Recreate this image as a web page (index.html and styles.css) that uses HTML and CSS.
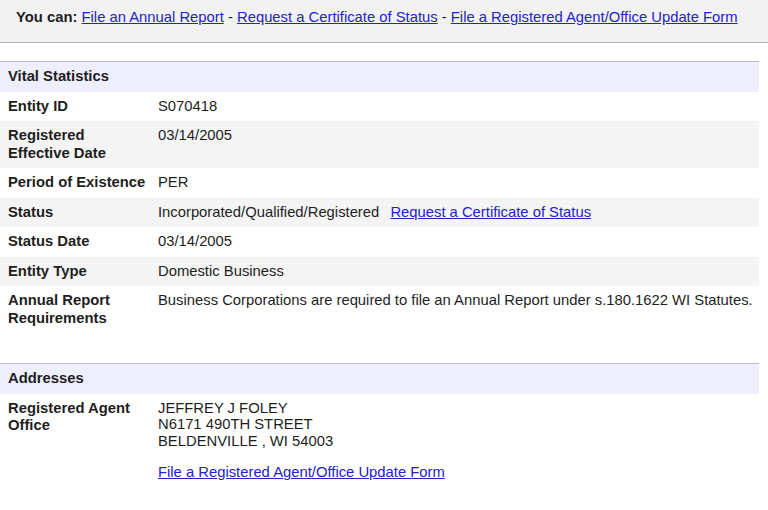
FILE: index.html
```html
<!DOCTYPE html>
<html lang="en">
<head>
    <meta charset="UTF-8">
    <meta name="viewport" content="width=device-width, initial-scale=1.0">
    <title>Corporate Records - Entity Details</title>
    <link rel="stylesheet" href="styles.css">
</head>
<body>
    <!-- Quick actions bar -->
    <div class="actions">
        <strong>You can:</strong>
        <a href="#">File an Annual Report</a> -
        <a href="#">Request a Certificate of Status</a> -
        <a href="#">File a Registered Agent/Office Update Form</a>
    </div>

    <table class="details">
        <colgroup><col class="label-col"><col></colgroup>
        <tr class="section-head"><th colspan="2">Vital Statistics</th></tr>
        <tr>
            <td class="label">Entity ID</td>
            <td>S070418</td>
        </tr>
        <tr class="alt">
            <td class="label">Registered Effective Date</td>
            <td>03/14/2005</td>
        </tr>
        <tr>
            <td class="label">Period of Existence</td>
            <td>PER</td>
        </tr>
        <tr class="alt">
            <td class="label">Status</td>
            <td>Incorporated/Qualified/Registered <a class="inline-link" href="#">Request a Certificate of Status</a></td>
        </tr>
        <tr>
            <td class="label">Status Date</td>
            <td>03/14/2005</td>
        </tr>
        <tr class="alt">
            <td class="label">Entity Type</td>
            <td>Domestic Business</td>
        </tr>
        <tr>
            <td class="label">Annual Report Requirements</td>
            <td>Business Corporations are required to file an Annual Report under s.180.1622 WI Statutes.</td>
        </tr>
    </table>

    <table class="details addresses">
        <colgroup><col class="label-col"><col></colgroup>
        <tr class="section-head"><th colspan="2">Addresses</th></tr>
        <tr>
            <td class="label">Registered Agent Office</td>
            <td>
                <div class="address">
                    JEFFREY J FOLEY<br>
                    N6171 490TH STREET<br>
                    BELDENVILLE , WI 54003
                </div>
                <a href="#">File a Registered Agent/Office Update Form</a>
            </td>
        </tr>
    </table>
</body>
</html>
```

FILE: styles.css
```css
/* Page */
body {
    margin: 0;
    font-family: "Liberation Sans", Arial, sans-serif;
    font-size: 14.8px;
    line-height: 17.5px;
    color: #1e1e1e;
    background-color: #ffffff;
}

a {
    color: #2323c8;
    text-decoration: underline;
}

/* Top actions bar */
.actions {
    background-color: #f2f2f2;
    border-bottom: 1px solid #b4b4b4;
    padding: 9px 16px 15.5px;
}

/* Details tables */
.details {
    width: 759px;
    border-collapse: collapse;
    table-layout: fixed;
    margin-top: 18px;
}

.details .label-col {
    width: 150px;
}

.details.addresses {
    margin-top: 30px;
}

.details th {
    text-align: left;
    font-weight: bold;
    background-color: #eeeefc;
    border-top: 1px solid #b9b9cd;
    padding: 6px 8px;
}

.details td {
    vertical-align: top;
    padding: 6px 0 6px 8px;
}

.details td.label {
    font-weight: bold;
}

.details tr.alt td {
    background-color: #f4f4f4;
}

.inline-link {
    margin-left: 7px;
}

.address {
    line-height: 16.5px;
    margin-bottom: 15px;
}
```
